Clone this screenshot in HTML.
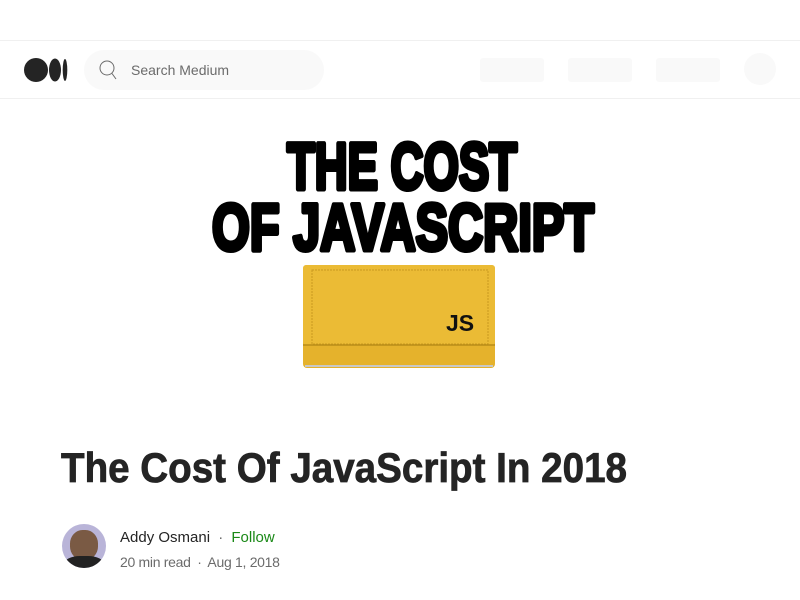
<!DOCTYPE html>
<html><head><meta charset="utf-8"><style>
body{margin:0;width:800px;height:600px;background:#fff;font-family:"Liberation Sans",sans-serif;position:relative;overflow:hidden}
.hdr{position:absolute;top:40px;left:0;width:800px;height:57px;border-top:1px solid #f0f0f0;border-bottom:1px solid #f0f0f0}
.search{position:absolute;left:84px;top:9px;width:240px;height:40px;border-radius:20px;background:#f9f9f9}
.search span{position:absolute;left:47px;top:12px;font-size:14px;color:#6b6b6b}
.ph{position:absolute;top:17px;width:64px;height:24px;background:#f9f9f9;border-radius:3px}
.meta{position:absolute;left:120px;font-size:15px;color:#242424}
</style></head><body>
<div class="hdr">
<svg style="position:absolute;left:24px;top:17px" width="46" height="24" viewBox="0 0 46 24"><ellipse cx="12" cy="12" rx="12" ry="12" fill="#242424"/><ellipse cx="31" cy="12" rx="6" ry="11.5" fill="#242424"/><ellipse cx="41" cy="12" rx="2.3" ry="11" fill="#242424"/></svg>
<div class="search"><svg style="position:absolute;left:14px;top:10px" width="20" height="20" viewBox="0 0 20 20"><circle cx="9" cy="8" r="7" fill="none" stroke="#6b6b6b" stroke-width="1"/><line x1="14" y1="13.5" x2="18" y2="19" stroke="#6b6b6b" stroke-width="1"/></svg><span>Search Medium</span></div>
<div class="ph" style="left:480px"></div><div class="ph" style="left:568px"></div><div class="ph" style="left:656px"></div>
<div style="position:absolute;left:744px;top:12px;width:32px;height:32px;border-radius:50%;background:#f9f9f9"></div>
</div>
<svg style="position:absolute;left:0;top:0" width="800" height="600">
<text x="287" y="189" textLength="230" lengthAdjust="spacingAndGlyphs" font-family="Liberation Sans" font-weight="bold" font-size="66" fill="#000" stroke="#000" stroke-width="5" stroke-linejoin="round">THE COST</text>
<text x="212" y="250" textLength="382" lengthAdjust="spacingAndGlyphs" font-family="Liberation Sans" font-weight="bold" font-size="66" fill="#000" stroke="#000" stroke-width="5" stroke-linejoin="round">OF JAVASCRIPT</text>
<rect x="303" y="265" width="192" height="103" rx="4" fill="#e5b22c"/>
<rect x="303" y="265" width="192" height="80" rx="3" fill="#ebbb35"/>
<rect x="312" y="270" width="176" height="74" fill="none" stroke="#c99a1e" stroke-width="1" stroke-dasharray="2 1"/>
<line x1="303" y1="345" x2="495" y2="345" stroke="#b98c18" stroke-width="1.5"/>
<line x1="305" y1="366" x2="493" y2="366" stroke="#c8c8c8" stroke-width="2"/>
<text x="446" y="331" font-family="Liberation Sans" font-weight="bold" font-size="23" fill="#111">JS</text>
<text x="61" y="482" textLength="566" lengthAdjust="spacingAndGlyphs" font-family="Liberation Sans" font-weight="bold" font-size="42" fill="#242424" stroke="#242424" stroke-width="0.8">The Cost Of JavaScript In 2018</text>
</svg>
<div style="position:absolute;left:62px;top:524px;width:44px;height:44px;border-radius:50%;background:#b9b4d8;overflow:hidden"><div style="position:absolute;left:8px;top:6px;width:28px;height:30px;border-radius:45%;background:#7a5a44"></div><div style="position:absolute;left:2px;top:32px;width:40px;height:20px;border-radius:40%;background:#222"></div></div>
<div class="meta" style="top:529px">Addy Osmani <span style="color:#6b6b6b;margin:0 4px">·</span> <span style="color:#1a8917">Follow</span></div>
<div class="meta" style="top:554px;font-size:14px;color:#6b6b6b;letter-spacing:-0.3px">20 min read <span style="margin:0 3px">·</span> Aug 1, 2018</div>
</body></html>
